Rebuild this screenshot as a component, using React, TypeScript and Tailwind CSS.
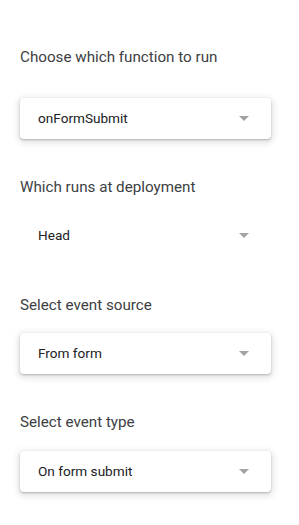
const fields = [
  { label: "Choose which function to run", value: "onFormSubmit", raised: true, top: "", gap: "mt-[31px]" },
  { label: "Which runs at deployment", value: "Head", raised: false, top: "mt-[38px]", gap: "mt-[18px]" },
  { label: "Select event source", value: "From form", raised: true, top: "mt-[39px]", gap: "mt-[18px]" },
  { label: "Select event type", value: "On form submit", raised: true, top: "mt-[38px]", gap: "mt-[19px]" },
];

function Caret() {
  return (
    <svg width="10" height="5" viewBox="0 0 10 5" className="shrink-0">
      <path d="M0 0 L10 0 L5 5 Z" fill="#a3a3a3" />
    </svg>
  );
}

export default function App() {
  return (
    <div
      className="min-h-[525px] w-[299px] bg-white pt-[47px] pl-[20px]"
      style={{ fontFamily: "Roboto, 'Liberation Sans', sans-serif" }}
    >
      {fields.map((f) => (
        <section key={f.label} className={f.top}>
          <h3 className="h-[20px] text-[15.2px] leading-[20px] text-[#3c4043]">{f.label}</h3>
          <div
            className={`${f.gap} flex h-[41px] w-[251px] items-center justify-between rounded-[4px] bg-white pl-[18px] pr-[22px] ${
              f.raised ? "shadow-[0_1px_2px_0_rgba(60,64,67,0.3),0_2px_6px_2px_rgba(60,64,67,0.15)]" : ""
            }`}
          >
            <span className="text-[13.6px] text-[#202124]">{f.value}</span>
            <Caret />
          </div>
        </section>
      ))}
    </div>
  );
}
